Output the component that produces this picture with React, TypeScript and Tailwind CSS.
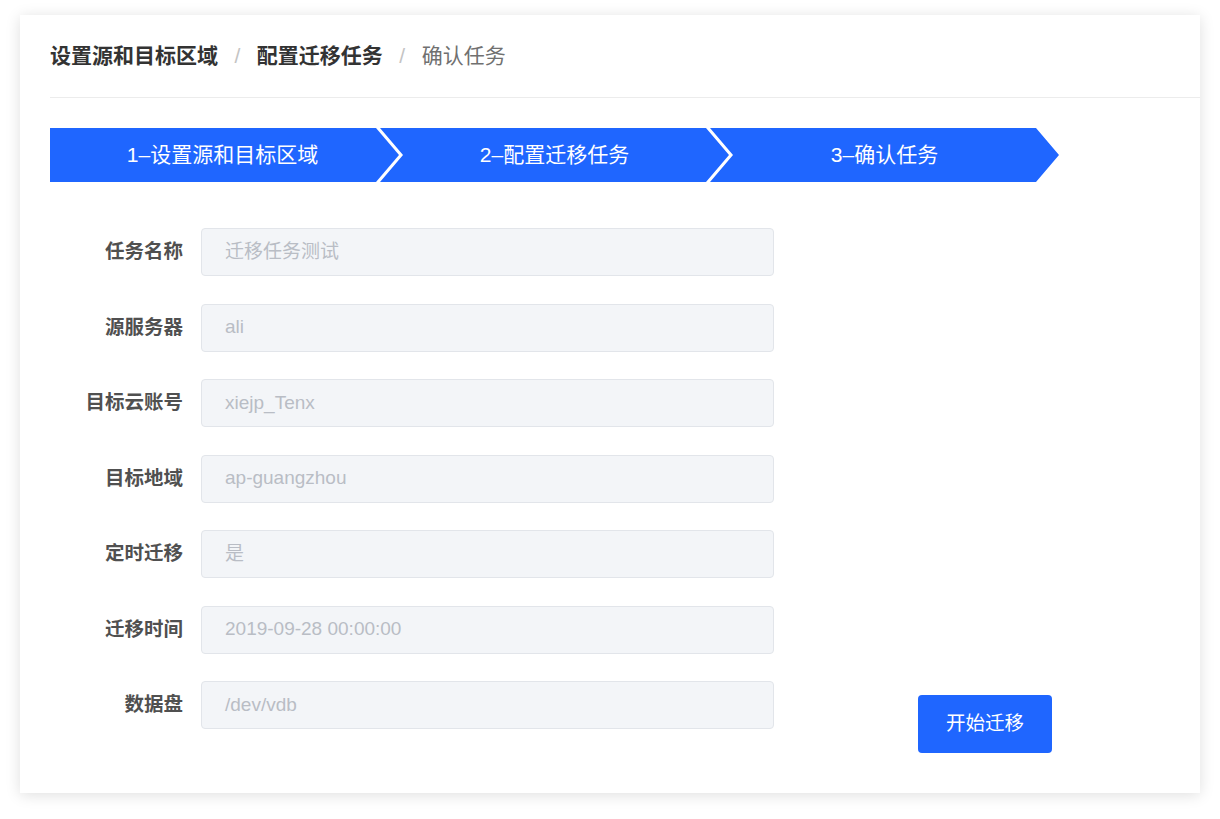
import React from "react";

const font = {
  fontFamily:
    '"Liberation Sans", "Noto Sans CJK SC", "Noto Sans", sans-serif',
};

const fields: [string, string][] = [
  ["任务名称", "迁移任务测试"],
  ["源服务器", "ali"],
  ["目标云账号", "xiejp_Tenx"],
  ["目标地域", "ap-guangzhou"],
  ["定时迁移", "是"],
  ["迁移时间", "2019-09-28 00:00:00"],
  ["数据盘", "/dev/vdb"],
];

export default function App() {
  return (
    <div
      className="w-[1220px] h-[819px] bg-white pt-[15px] pl-[20px]"
      style={font}
    >
      <div className="w-[1180px] h-[778px] bg-white shadow-[0_2px_14px_rgba(0,0,0,0.13)] pl-[30px]">
        {/* Breadcrumb */}
        <div className="h-[83px] flex items-center border-b border-[#ececec] text-[21px] pb-[1px]">
          <span className="font-semibold text-[#333333]">设置源和目标区域</span>
          <span className="mx-[16.5px] text-[#c4c4c4]">/</span>
          <span className="font-semibold text-[#333333]">配置迁移任务</span>
          <span className="mx-[16.5px] text-[#c4c4c4]">/</span>
          <span className="text-[#707070]">确认任务</span>
        </div>

        {/* Steps */}
        <div className="mt-[30px] flex h-[54px]">
          <div className="w-[349px] h-full bg-[#1f66ff] flex items-center justify-center text-white text-[21px] pr-[4px] [clip-path:polygon(0_0,calc(100%-23px)_0,100%_50%,calc(100%-23px)_100%,0_100%)]">
            1–设置源和目标区域
          </div>
          <div className="ml-[-19px] w-[349px] h-full bg-[#1f66ff] flex items-center justify-center text-white text-[21px] [clip-path:polygon(0_0,calc(100%-23px)_0,100%_50%,calc(100%-23px)_100%,0_100%,23px_50%)]">
            2–配置迁移任务
          </div>
          <div className="ml-[-19px] w-[349px] h-full bg-[#1f66ff] flex items-center justify-center text-white text-[21px] [clip-path:polygon(0_0,calc(100%-23px)_0,100%_50%,calc(100%-23px)_100%,0_100%,23px_50%)]">
            3–确认任务
          </div>
        </div>

        {/* Form */}
        <div className="mt-[46px] flex items-end ml-[-30px]">
          <div className="flex flex-col gap-[27.5px]">
            {fields.map(([label, value]) => (
              <div key={label} className="flex items-center">
                <div className="w-[163px] text-right text-[19.5px] font-semibold text-[#505050]">
                  {label}
                </div>
                <div className="ml-[18px] w-[573px] h-[48px] rounded-[4px] border border-[#e2e5ea] bg-[#f3f5f8] flex items-center pl-[23px] text-[19px] text-[#b9bdc5]">
                  {value}
                </div>
              </div>
            ))}
          </div>
          <button className="ml-[144px] mb-[-24px] w-[134px] h-[58px] rounded-[4px] bg-[#1f66ff] text-white text-[19.5px]">
            开始迁移
          </button>
        </div>
      </div>
    </div>
  );
}
